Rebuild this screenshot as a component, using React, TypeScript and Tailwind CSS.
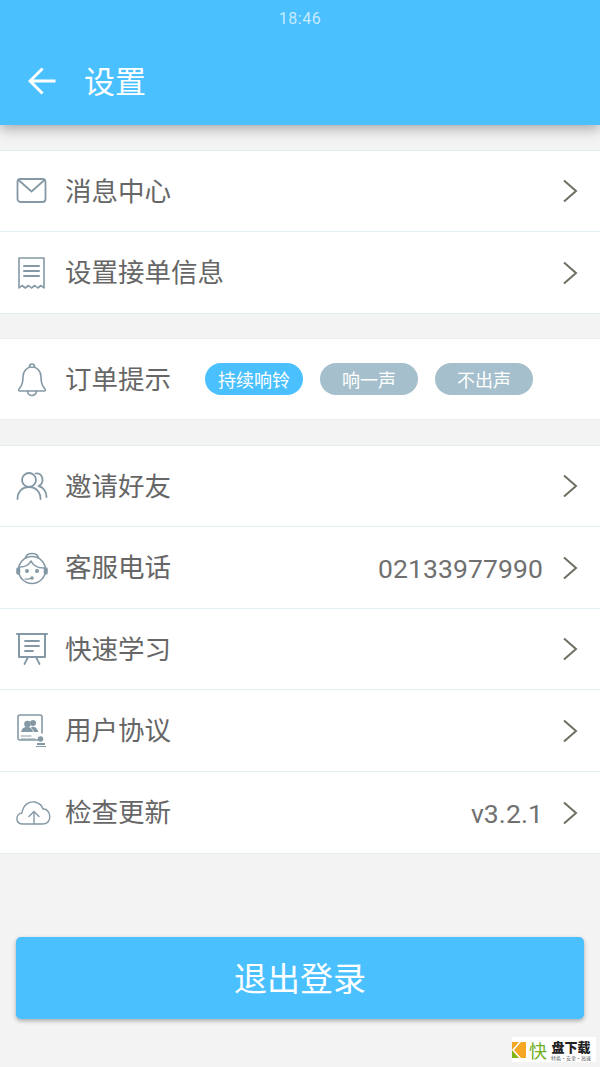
import React from 'react';

const cjk = { fontFamily: '"Noto Sans CJK SC", sans-serif' };

const stroke = {
  fill: 'none',
  stroke: '#8499a5',
  strokeWidth: 1.6,
  strokeLinecap: 'round' as const,
  strokeLinejoin: 'round' as const,
};

const Icons = {
  Mail: () => (
    <svg width="32" height="32" viewBox="0 0 32 32" {...stroke} strokeWidth="1.800">
      <rect x="1.500" y="4" width="28" height="23" rx="3" />
      <path d="M2.500 5l13 11.500L28.500 5" />
    </svg>
  ),
  Receipt: () => (
    <svg width="32" height="34" viewBox="0 0 32 34" {...stroke}>
      <path d="M3 32V2h25v30l-3-2.500-3.200 2.500-3-2.500-3.300 2.500-3-2.500-3.200 2.500-3.300-2.500z" />
      <path d="M8 10h15M8 15h15M8 20h15" strokeWidth="2" />
    </svg>
  ),
  Bell: () => (
    <svg width="32" height="36" viewBox="0 0 32 36" {...stroke}>
      <path d="M3 28c3-3 4-6 4-12 0-6 4-10 9-10s9 4 9 10c0 6 1 9 4 12 .8 1 .3 2-1 2H4c-1.300 0-1.800-1-1-2z" />
      <path d="M13.500 5.500a2.500 2.500 0 015 0M11.500 30a4.500 4.500 0 009 0" />
    </svg>
  ),
  Friends: () => (
    <svg width="32" height="30" viewBox="0 0 32 30" {...stroke} strokeWidth="1.800">
      <circle cx="13" cy="9" r="7" />
      <path d="M1.500 28c0-7 4.500-12 11.500-12s11.500 5 11.500 12" />
      <path d="M19.500 2.500c4-1 7 2 7 6.500 0 3-1.500 5-4 6 5 1 8 6 8 11" />
    </svg>
  ),
  Service: () => (
    <svg width="32" height="36" viewBox="0 0 32 36" {...stroke}>
      <circle cx="16" cy="20" r="13.500" />
      <path d="M9.500 8c1-6 12-6 13 0" />
      <path d="M4 17c5 0 9-2 11-6 2 4 7 7 13 7" />
      <path d="M9 29c3 .5 5 0 7-1" strokeWidth="1.200" />
      <circle cx="11" cy="21" r="1.200" fill="#8499a5" />
      <circle cx="21" cy="21" r="1.200" fill="#8499a5" />
      <rect x="1" y="18" width="2.500" height="6" rx="1.200" fill="#8499a5" />
      <rect x="28.500" y="18" width="2.500" height="6" rx="1.200" fill="#8499a5" />
      <circle cx="16" cy="28" r="1" fill="#8499a5" />
    </svg>
  ),
  Board: () => (
    <svg width="32" height="34" viewBox="0 0 32 34" {...stroke}>
      <path d="M1 2h30M3 2v23h26V2" strokeWidth="2" />
      <path d="M9 9h14M9 14h14M9 19h8M12 25l-3.500 7M20 25l3.500 7" strokeWidth="1.800" />
    </svg>
  ),
  Contract: () => (
    <svg width="32" height="34" viewBox="0 0 32 34">
      <path d="M24 26H4a2 2 0 01-2-2V3a2 2 0 012-2h20a2 2 0 012 2v16" {...stroke} />
      <circle cx="11.500" cy="10" r="3.300" fill="#8499a5" />
      <circle cx="17" cy="9" r="3" fill="#8499a5" />
      <path d="M5 18c1-4 3-5 6-5s5 1 6 5zM15 13c3-1 6 0 7.500 5H18z" fill="#8499a5" />
      <path d="M5 22h10M5 25h14" {...stroke} strokeWidth="1" />
      <circle cx="24.500" cy="25" r="2.800" fill="#8499a5" />
      <rect x="21" y="29" width="8" height="2" fill="#8499a5" />
      <rect x="20" y="32" width="10" height="1" fill="#8499a5" />
    </svg>
  ),
  Cloud: () => (
    <svg width="36" height="26" viewBox="0 0 36 26" {...stroke} strokeWidth="1.400">
      <path d="M9 24H7c-8 0-8-10-1-11C7 5 13 1 19 2c4 1 7 3 8 7 8-1 10 15 0 15z" />
      <path d="M18 24V12M13 16.500l5-5 5 5" />
    </svg>
  ),
};

const Chevron = () => (
  <svg width="16" height="24" viewBox="0 0 16 24" fill="none" stroke="#6f6f63" strokeWidth="2" className="shrink-0">
    <path d="M2 1.500L14 12 2 22.500" />
  </svg>
);

const Row = ({ icon, label, value, h = 'h-[82px]', last }: { icon: React.ReactNode; label: string; value?: string; h?: string; last?: boolean }) => (
  <div className={`flex items-center pl-[16px] pr-[22px] bg-white ${h} ${last ? '' : 'border-b border-[#e3ecf1]'}`}>
    <div className="w-[49px] flex justify-start shrink-0">{icon}</div>
    <span className="pb-[2px] text-[26.500px] text-[#666666] leading-none" style={cjk}>{label}</span>
    <span className="ml-auto mr-[19px] pt-[4px] text-[26.500px] text-[#707070] leading-none tracking-[0.100px] font-['Roboto',sans-serif]">{value}</span>
    <Chevron />
  </div>
);

const Pill = ({ label, active }: { label: string; active?: boolean }) => (
  <span
    className={`w-[98px] h-[32px] rounded-full flex items-center justify-center text-[18px] text-white ${active ? 'bg-[#4ac0ff]' : 'bg-[#a5bfcd]'}`}
    style={cjk}
  >
    {label}
  </span>
);

export default function App() {
  return (
    <div className="w-[600px] h-[1067px] bg-[#f3f3f3] overflow-hidden flex flex-col relative">
      {/* ヘッダー */}
      <header className="h-[125px] bg-[#4ac0ff] shrink-0 shadow-[0_4px_12px_rgba(0,0,0,0.3)] flex flex-col relative">
        <div className="h-[36px] pt-[1px] flex items-center justify-center text-[16px] text-white/70 tracking-[0.500px] font-['Roboto',sans-serif]">18:46</div>
        <div className="flex items-center pl-[28px] mt-[28px]">
          <svg width="28" height="28" viewBox="0 0 28 28" fill="none" stroke="white" strokeWidth="3" strokeLinecap="square">
            <path d="M26 14H3M13.500 2.500L2 14l11.500 11.500" />
          </svg>
          <span className="ml-[28px] pb-[2px] text-[31px] text-white leading-none" style={cjk}>设置</span>
        </div>
      </header>

      <section className="mt-[25px] border-y border-[#e3ecf1]">
        <Row icon={<Icons.Mail />} label="消息中心" h="h-[81px]" />
        <Row icon={<Icons.Receipt />} label="设置接单信息" h="h-[81px]" last />
      </section>

      <section className="mt-[24px] border-y border-[#e8eef1] bg-white h-[82px] flex items-center pl-[16px]">
        <div className="w-[49px] shrink-0"><Icons.Bell /></div>
        <span className="pb-[2px] text-[26.500px] text-[#666666] leading-none" style={cjk}>订单提示</span>
        <div className="ml-[34px] flex gap-[17px]">
          <Pill label="持续响铃" active />
          <Pill label="响一声" />
          <Pill label="不出声" />
        </div>
      </section>

      <section className="mt-[25px] border-y border-[#e3ecf1]">
        <Row icon={<Icons.Friends />} label="邀请好友" h="h-[81px]" />
        <Row icon={<Icons.Service />} label="客服电话" value="02133977990" />
        <Row icon={<Icons.Board />} label="快速学习" h="h-[81px]" />
        <Row icon={<Icons.Contract />} label="用户协议" />
        <Row icon={<Icons.Cloud />} label="检查更新" value="v3.2.1" h="h-[81px]" last />
      </section>

      <button className="mt-[83px] mx-[16px] h-[82px] shrink-0 rounded-[5px] bg-[#4ac0ff] text-white text-[33px] shadow-[0_2px_4px_rgba(0,0,0,0.3)]" style={cjk}>
        退出登录
      </button>

      {/* 水印 */}
      <div className="absolute left-[512px] top-[1037px] w-[84px] h-[25px] bg-white flex items-center">
        <svg width="14" height="16" viewBox="0 0 14 16" className="shrink-0">
          <rect width="14" height="16" fill="#f5a623" />
          <path d="M0 8L7 0h2L2 8l7 8H7z" fill="#ffffff" />
          <path d="M0 8.500L6.500 16H0z" fill="#7cb518" />
        </svg>
        <span className="text-[18px] leading-none text-[#6fb01e] ml-[3px]" style={cjk}>快</span>
        <div className="flex flex-col items-center ml-[2px] w-[44px]">
          <span className="text-[13px] h-[15px] leading-[15px] font-black text-[#222222]" style={cjk}>盘下载</span>
          <span className="text-[5px] h-[7px] leading-[7px] text-[#555555] whitespace-nowrap" style={cjk}>特色·安全·高速</span>
        </div>
      </div>
    </div>
  );
}
